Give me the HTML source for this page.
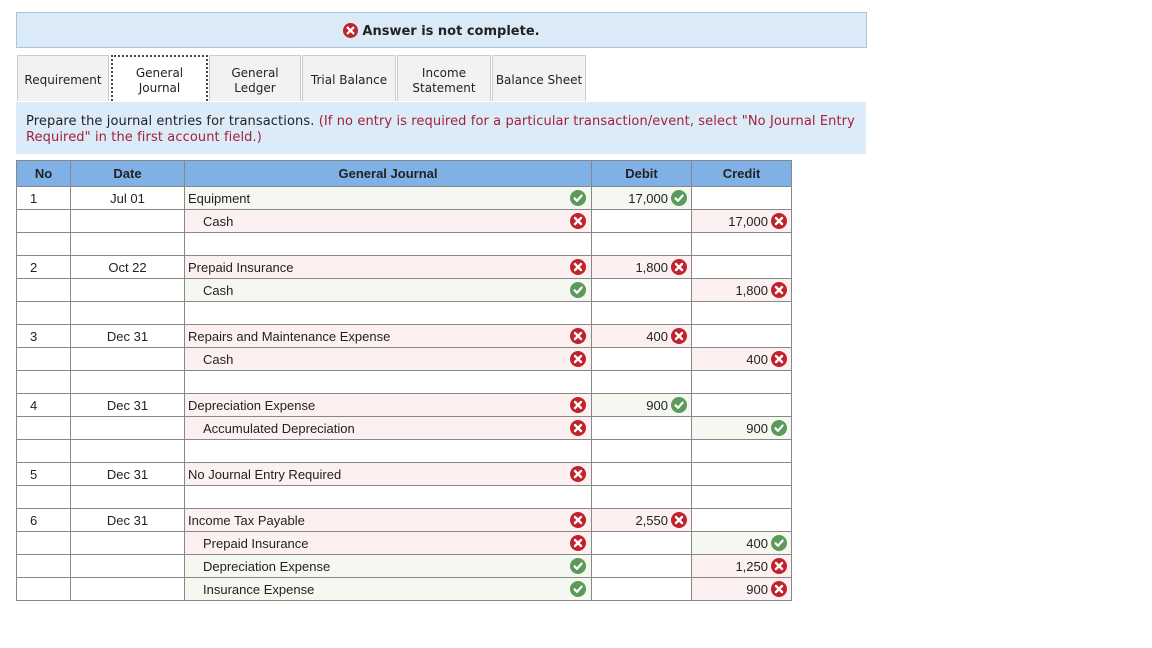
<!DOCTYPE html>
<html><head><meta charset="utf-8"><style>
body{margin:0;width:1152px;height:648px;background:#fff;position:relative;font-family:"Liberation Sans",Arial,sans-serif;overflow:hidden}
.banner{position:absolute;left:16px;top:12px;width:849px;height:34px;background:#dbeaf7;border:1px solid #a9c6e0;font-family:"DejaVu Sans",Verdana,sans-serif;font-weight:bold;font-size:13px;color:#222;text-align:center;line-height:37px}
.banner svg{vertical-align:-3px;margin-right:4px}
.tab{position:absolute;top:55px;height:46px;padding-top:4px;background:#f2f2f2;border:1px solid #ccc;border-bottom:none;font-family:"DejaVu Sans",Verdana,sans-serif;font-size:12px;color:#222;display:flex;align-items:center;justify-content:center;text-align:center;line-height:15px;box-sizing:border-box}
.tab.act{background:#fff;border:2px dotted #445;border-bottom:none}
.instr{position:absolute;left:16px;top:102px;width:840px;height:52px;background:#dcebf8;padding:0 0 0 10px;font-family:"DejaVu Sans",Verdana,sans-serif;font-size:13px;letter-spacing:0.1px;color:#222;line-height:16px;box-sizing:content-box}
.instr div{padding-top:12px}
.red{color:#a5203c}
table{position:absolute;left:16px;top:160px;border-collapse:collapse;table-layout:fixed;font-size:13px;color:#222}
tr{height:23px}
td,th{border:1px solid #888;padding:0;vertical-align:top}
th{background:#7fb1e6;font-weight:bold;vertical-align:middle;font-size:13px}
td{line-height:21px;padding-top:1px}
.no{padding-left:13px}
.dt{text-align:center}
.ac{padding-left:3px;position:relative}
.in{padding-left:18px}
.num{text-align:right;padding-right:4px}
.g{background:#f4f8f1}
.r{background:#fdf0f0}
.ac svg{position:absolute;right:5px;top:3px}
.num svg{vertical-align:-3px;margin-left:3px}
</style></head><body>
<svg width="0" height="0" style="position:absolute"><defs>
<g id="x"><circle cx="8" cy="8" r="8" fill="#c0232c"/><path d="M5 5L11 11M11 5L5 11" stroke="#fff" stroke-width="2.4" stroke-linecap="round"/></g>
<g id="k"><circle cx="8" cy="8" r="8" fill="#5b9a5b"/><path d="M4.5 8.3L7 10.8L11.6 5.6" stroke="#fff" stroke-width="2.2" fill="none" stroke-linecap="round" stroke-linejoin="round"/></g>
</defs></svg>
<div class="banner"><svg width="15" height="15" viewBox="0 0 16 16"><use href="#x"/></svg>Answer is not complete.</div>
<div class="tab" style="left:17px;width:92px">Requirement</div>
<div class="tab act" style="left:111px;width:97px">General<br>Journal</div>
<div class="tab" style="left:209px;width:92px">General<br>Ledger</div>
<div class="tab" style="left:302px;width:94px">Trial Balance</div>
<div class="tab" style="left:397px;width:94px">Income<br>Statement</div>
<div class="tab" style="left:492px;width:94px">Balance Sheet</div>
<div class="instr"><div>Prepare the journal entries for transactions. <span class="red">(If no entry is required for a particular transaction/event, select "No Journal Entry Required" in the first account field.)</span></div></div>
<table>
<colgroup><col style="width:54px"><col style="width:114px"><col style="width:407px"><col style="width:100px"><col style="width:100px"></colgroup>
<tr style="height:26px"><th>No</th><th>Date</th><th>General Journal</th><th>Debit</th><th>Credit</th></tr>
<tr><td class="no">1</td><td class="dt">Jul 01</td><td class="ac g">Equipment<svg width="16" height="16"><use href="#k"/></svg></td><td class="num g">17,000<svg width="16" height="16"><use href="#k"/></svg></td><td></td></tr>
<tr><td></td><td></td><td class="ac in r">Cash<svg width="16" height="16"><use href="#x"/></svg></td><td></td><td class="num r">17,000<svg width="16" height="16"><use href="#x"/></svg></td></tr>
<tr><td></td><td></td><td></td><td></td><td></td></tr>
<tr><td class="no">2</td><td class="dt">Oct 22</td><td class="ac r">Prepaid Insurance<svg width="16" height="16"><use href="#x"/></svg></td><td class="num r">1,800<svg width="16" height="16"><use href="#x"/></svg></td><td></td></tr>
<tr><td></td><td></td><td class="ac in g">Cash<svg width="16" height="16"><use href="#k"/></svg></td><td></td><td class="num r">1,800<svg width="16" height="16"><use href="#x"/></svg></td></tr>
<tr><td></td><td></td><td></td><td></td><td></td></tr>
<tr><td class="no">3</td><td class="dt">Dec 31</td><td class="ac r">Repairs and Maintenance Expense<svg width="16" height="16"><use href="#x"/></svg></td><td class="num r">400<svg width="16" height="16"><use href="#x"/></svg></td><td></td></tr>
<tr><td></td><td></td><td class="ac in r">Cash<svg width="16" height="16"><use href="#x"/></svg></td><td></td><td class="num r">400<svg width="16" height="16"><use href="#x"/></svg></td></tr>
<tr><td></td><td></td><td></td><td></td><td></td></tr>
<tr><td class="no">4</td><td class="dt">Dec 31</td><td class="ac r">Depreciation Expense<svg width="16" height="16"><use href="#x"/></svg></td><td class="num g">900<svg width="16" height="16"><use href="#k"/></svg></td><td></td></tr>
<tr><td></td><td></td><td class="ac in r">Accumulated Depreciation<svg width="16" height="16"><use href="#x"/></svg></td><td></td><td class="num g">900<svg width="16" height="16"><use href="#k"/></svg></td></tr>
<tr><td></td><td></td><td></td><td></td><td></td></tr>
<tr><td class="no">5</td><td class="dt">Dec 31</td><td class="ac r">No Journal Entry Required<svg width="16" height="16"><use href="#x"/></svg></td><td></td><td></td></tr>
<tr><td></td><td></td><td></td><td></td><td></td></tr>
<tr><td class="no">6</td><td class="dt">Dec 31</td><td class="ac r">Income Tax Payable<svg width="16" height="16"><use href="#x"/></svg></td><td class="num r">2,550<svg width="16" height="16"><use href="#x"/></svg></td><td></td></tr>
<tr><td></td><td></td><td class="ac in r">Prepaid Insurance<svg width="16" height="16"><use href="#x"/></svg></td><td></td><td class="num g">400<svg width="16" height="16"><use href="#k"/></svg></td></tr>
<tr><td></td><td></td><td class="ac in g">Depreciation Expense<svg width="16" height="16"><use href="#k"/></svg></td><td></td><td class="num r">1,250<svg width="16" height="16"><use href="#x"/></svg></td></tr>
<tr><td></td><td></td><td class="ac in g">Insurance Expense<svg width="16" height="16"><use href="#k"/></svg></td><td></td><td class="num r">900<svg width="16" height="16"><use href="#x"/></svg></td></tr>
</table>
</body></html>
